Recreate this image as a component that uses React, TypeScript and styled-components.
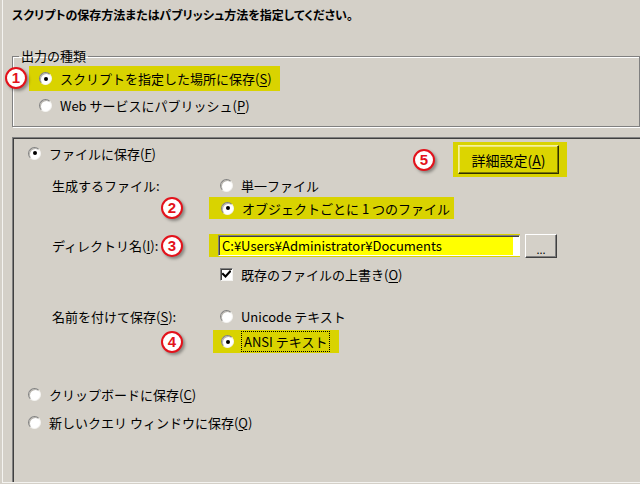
import React from 'react';
import styled, { createGlobalStyle } from 'styled-components';

const GlobalStyle = createGlobalStyle`
  html, body {
    margin: 0;
    padding: 0;
    background: #d4d0c8;
  }
  body {
    font-family: "Noto Sans CJK JP", "Noto Sans", sans-serif;
    font-size: 13px;
    color: #000;
  }
`;

const Window = styled.div`
  width: 640px;
  height: 484px;
  overflow: hidden;
  padding-left: 2px;
  box-sizing: border-box;
  background: #d4d0c8;
`;

const Frame = styled.div`
  height: 483px;
  box-sizing: border-box;
  border-left: 1px solid #f4f3f0;
  border-bottom: 1px solid #f4f3f0;
  display: flex;
  flex-direction: column;
`;

const Title = styled.h1`
  margin: 0;
  padding: 7px 0 0 9px;
  font-size: 12px;
  line-height: 16px;
  font-weight: 700;
  font-feature-settings: "palt";
  white-space: nowrap;
`;

// --------------- 出力の種類 ---------------
const GroupBox = styled.fieldset`
  margin: 25px 0 0 9px;
  padding: 0 0 10px 0;
  border: 1px solid #808080;
  box-shadow: inset 1px 1px 0 #fff, 1px 1px 0 #fff;
  min-width: 0;
`;

const Legend = styled.legend`
  margin-left: 6px;
  padding: 0 2px;
  line-height: 16px;
  font-size: 13px;
`;

const GroupList = styled.div`
  display: flex;
  flex-direction: column;
  gap: 3px;
  padding: 2px 0 0 16px;
`;

const MarkedRow = styled.div`
  position: relative;
  display: flex;
`;

// --------------- panel ---------------
const Panel = styled.div`
  flex: 1;
  margin: 10px 0 0 9px;
  border-top: 1px solid #808080;
  border-left: 1px solid #808080;
  box-shadow: inset 1px 1px 0 #404040;
  display: flex;
  flex-direction: column;
`;

const TopRow = styled.div`
  display: flex;
  align-items: flex-start;
  justify-content: space-between;
  padding: 4px 73px 0 15px;
`;

const ButtonGroup = styled.div`
  display: flex;
  align-items: center;
  gap: 18px;
`;

type SectionProps = { $rows: string; $gap: number; $mt: number };

const Section = styled.div<SectionProps>`
  display: grid;
  grid-template-columns: 108px 24px auto;
  grid-template-rows: ${(p) => p.$rows};
  row-gap: ${(p) => p.$gap}px;
  align-items: center;
  margin: ${(p) => p.$mt}px 0 0 39px;
`;

const Label = styled.span`
  white-space: nowrap;
  grid-column: 1;
`;

const MarkerCell = styled.div`
  grid-column: 2;
  display: flex;
  justify-content: center;
`;

const OptionCell = styled.div`
  grid-column: 3;
  display: flex;
  align-items: center;
  padding-left: 25px;
`;

const BottomList = styled.div`
  display: flex;
  flex-direction: column;
  gap: 6px;
  margin: 30px 0 0 15px;
`;

// --------------- controls ---------------
type RowProps = { $hl?: boolean; $pl?: number; $pr?: number; $ml?: number; $h?: number };

const OptionRow = styled.div<RowProps>`
  display: flex;
  align-items: center;
  gap: 8px;
  height: ${(p) => p.$h ?? 22}px;
  padding: 0 ${(p) => p.$pr ?? 0}px 0 ${(p) => p.$pl ?? 0}px;
  margin-left: ${(p) => p.$ml ?? 0}px;
  background: ${(p) => (p.$hl ? '#d9d300' : 'transparent')};
  white-space: nowrap;
`;

const RadioCircle = styled.span<{ $on?: boolean }>`
  flex: none;
  width: 13px;
  height: 13px;
  box-sizing: border-box;
  border-radius: 50%;
  background: #fff;
  border: 1px solid;
  border-color: #808080 #f4f3f0 #f4f3f0 #808080;
  box-shadow: inset 1px 1px 0 #b8b5ae;
  display: inline-flex;
  align-items: center;
  justify-content: center;

  &::after {
    content: '';
    width: 4px;
    height: 4px;
    border-radius: 50%;
    background: ${(p) => (p.$on ? '#000' : 'transparent')};
  }
`;

const CheckSquare = styled.span`
  flex: none;
  width: 13px;
  height: 13px;
  box-sizing: border-box;
  background: #fff;
  border: 1px solid;
  border-color: #808080 #f4f3f0 #f4f3f0 #808080;
  box-shadow: inset 1px 1px 0 #404040;
  display: inline-flex;
  align-items: center;
  justify-content: center;
`;

const FocusText = styled.span`
  outline: 1px dotted #000;
  outline-offset: 0;
  padding: 0 2px;
`;

const Marker = styled.span`
  width: 18px;
  height: 18px;
  border-radius: 50%;
  border: 2px solid #e3121b;
  background: #fff;
  color: #e3121b;
  font-family: "Liberation Sans", Arial, sans-serif;
  font-size: 15px;
  font-weight: 700;
  line-height: 18px;
  text-align: center;
  box-shadow: 2px 2px 3px rgba(0, 0, 0, 0.35);
  flex: none;
`;

const OverlayMarker = styled(Marker)`
  position: absolute;
  left: -24px;
  top: 1px;
`;

const Button = styled.button`
  font-family: inherit;
  font-size: 13px;
  color: #000;
  background: #d4d0c8;
  border: 1px solid;
  border-color: #fff #404040 #404040 #fff;
  box-shadow: inset -1px -1px 0 #808080;
  padding: 0;
`;

const DetailHighlight = styled.div`
  background: #d9d300;
  padding: 3px 8px 3px 5px;
  display: flex;
`;

const DetailButton = styled(Button)`
  width: 101px;
  height: 29px;
  font-size: 14px;
  background: #dcd500;
  border-color: #f6f29a #302f00 #302f00 #f6f29a;
  box-shadow: inset -1px -1px 0 #7d7900, inset 1px 1px 0 #ece67a;
`;

const BrowseButton = styled(Button)`
  width: 32px;
  height: 24px;
  margin-left: 5px;
  font-size: 11px;
  line-height: 28px;
`;

const PathHighlight = styled.div`
  background: #d9d300;
  padding: 1px 0 1px 9px;
  display: flex;
`;

const PathBox = styled.div`
  width: 302px;
  height: 21px;
  box-sizing: border-box;
  border: 1px solid;
  border-color: #808080 #fff #fff #808080;
  box-shadow: inset 1px 1px 0 #404040, inset -6px 0 0 #fff;
  background: #ffff00;
  padding-left: 3px;
  display: flex;
  align-items: center;
  white-space: nowrap;
`;

const Key = styled.u`
  text-underline-offset: 2px;
`;

type RadioProps = {
  on?: boolean;
  children: React.ReactNode;
} & RowProps;

function Radio({ on, children, ...row }: RadioProps) {
  return (
    <OptionRow {...row}>
      <RadioCircle $on={on} />
      <span>{children}</span>
    </OptionRow>
  );
}

function CheckMark() {
  return (
    <svg width="9" height="9" viewBox="0 0 9 9">
      <path d="M1 4 L3.5 6.5 L8 1.5" fill="none" stroke="#000" strokeWidth="2" strokeLinecap="square" />
    </svg>
  );
}

export default function App() {
  return (
    <Window>
      <GlobalStyle />
      <Frame>
        <Title>スクリプトの保存方法またはパブリッシュ方法を指定してください。</Title>

        <GroupBox>
          <Legend>出力の種類</Legend>
          <GroupList>
            <MarkedRow>
              <OverlayMarker>1</OverlayMarker>
              <Radio on $hl $pl={10} $pr={8} $h={25}>
                スクリプトを指定した場所に保存(<Key>S</Key>)
              </Radio>
            </MarkedRow>
            <Radio $pl={10}>
              Web サービスにパブリッシュ(<Key>P</Key>)
            </Radio>
          </GroupList>
        </GroupBox>

        <Panel>
          <TopRow>
            <Radio on $h={22}>
              ファイルに保存(<Key>F</Key>)
            </Radio>
            <ButtonGroup>
              <Marker>5</Marker>
              <DetailHighlight>
                <DetailButton>
                  詳細設定(<Key>A</Key>)
                </DetailButton>
              </DetailHighlight>
            </ButtonGroup>
          </TopRow>

          <Section $rows="16px 20px" $gap={5} $mt={0}>
            <Label>生成するファイル:</Label>
            <OptionCell>
              <Radio $pl={11} $h={16}>単一ファイル</Radio>
            </OptionCell>
            <MarkerCell>
              <Marker>2</Marker>
            </MarkerCell>
            <OptionCell>
              <Radio on $hl $pl={12} $pr={4} $h={22}>
                オブジェクトごとに 1 つのファイル
              </Radio>
            </OptionCell>
          </Section>

          <Section $rows="23px 22px" $gap={6} $mt={16}>
            <Label>
              ディレクトリ名(<Key>I</Key>):
            </Label>
            <MarkerCell>
              <Marker>3</Marker>
            </MarkerCell>
            <OptionCell>
              <PathHighlight>
                <PathBox>C:¥Users¥Administrator¥Documents</PathBox>
              </PathHighlight>
              <BrowseButton>...</BrowseButton>
            </OptionCell>
            <OptionCell>
              <OptionRow $pl={11}>
                <CheckSquare>
                  <CheckMark />
                </CheckSquare>
                <span>
                  既存のファイルの上書き(<Key>O</Key>)
                </span>
              </OptionRow>
            </OptionCell>
          </Section>

          <Section $rows="22px 23px" $gap={3} $mt={20}>
            <Label>
              名前を付けて保存(<Key>S</Key>):
            </Label>
            <OptionCell>
              <Radio $pl={11}>Unicode テキスト</Radio>
            </OptionCell>
            <MarkerCell>
              <Marker>4</Marker>
            </MarkerCell>
            <OptionCell>
              <OptionRow $hl $ml={4} $pl={8} $pr={10} $h={23}>
                <RadioCircle $on />
                <FocusText>ANSI テキスト</FocusText>
              </OptionRow>
            </OptionCell>
          </Section>

          <BottomList>
            <Radio>
              クリップボードに保存(<Key>C</Key>)
            </Radio>
            <Radio>
              新しいクエリ ウィンドウに保存(<Key>Q</Key>)
            </Radio>
          </BottomList>
        </Panel>
      </Frame>
    </Window>
  );
}
